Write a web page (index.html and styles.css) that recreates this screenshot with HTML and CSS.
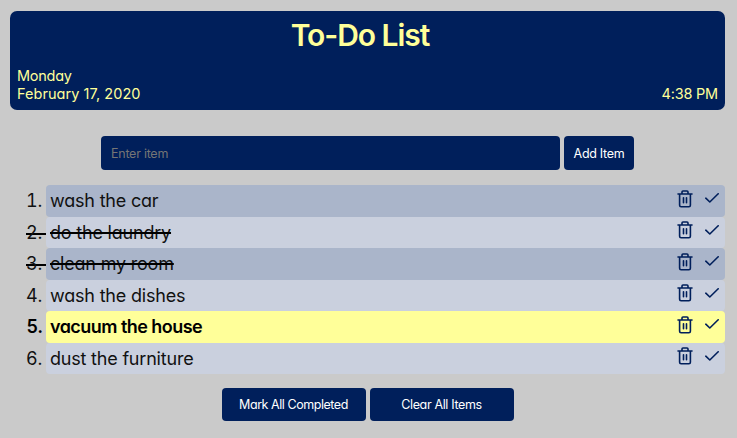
FILE: index.html
```html
<!DOCTYPE html>
<html lang="en">
<head>
<meta charset="utf-8">
<title>To-Do List</title>
<link rel="stylesheet" href="styles.css">
</head>
<body>
<svg class="defs" aria-hidden="true">
  <symbol id="trash" viewBox="0 0 16 18"><path d="M1 4H15M5 4V2Q5 1 6 1H10Q11 1 11 2V4M2.6 4V15.2Q2.6 16.7 4.1 16.7H11.9Q13.4 16.7 13.4 15.2V4M6.5 7.7V12.7M9.5 7.7V12.7"/></symbol>
  <symbol id="check" viewBox="0 0 14 10"><path d="M.8 5.2L4.8 9L13.2 .8"/></symbol>
</svg>
<header class="header">
  <h1>To-Do List</h1>
  <div class="info">
    <div><div class="day">Monday</div><div class="date">February 17, 2020</div></div>
    <div class="time">4:38 PM</div>
  </div>
</header>
<form class="entry">
  <input type="text" placeholder="Enter item">
  <button type="button" class="add">Add Item</button>
</form>
<ol class="list">
  <li><span class="num">1.</span><div class="row"><span class="text">wash the car</span><svg class="trash"><use href="#trash"/></svg><svg class="check"><use href="#check"/></svg></div></li>
  <li class="done"><span class="num">2.</span><div class="row"><span class="text">do the laundry</span><svg class="trash"><use href="#trash"/></svg><svg class="check"><use href="#check"/></svg></div></li>
  <li class="done"><span class="num">3.</span><div class="row"><span class="text">clean my room</span><svg class="trash"><use href="#trash"/></svg><svg class="check"><use href="#check"/></svg></div></li>
  <li><span class="num">4.</span><div class="row"><span class="text">wash the dishes</span><svg class="trash"><use href="#trash"/></svg><svg class="check"><use href="#check"/></svg></div></li>
  <li class="active"><span class="num">5.</span><div class="row"><span class="text">vacuum the house</span><svg class="trash"><use href="#trash"/></svg><svg class="check"><use href="#check"/></svg></div></li>
  <li><span class="num">6.</span><div class="row"><span class="text">dust the furniture</span><svg class="trash"><use href="#trash"/></svg><svg class="check"><use href="#check"/></svg></div></li>
</ol>
<footer class="actions">
  <button type="button" class="mark">Mark All Completed</button>
  <button type="button">Clear All Items</button>
</footer>
</body>
</html>
```
FILE: styles.css
```css
* { box-sizing: border-box; }
body, input, button {
  font-family: Inter, Lato, sans-serif;
  font-feature-settings: "cv11";
}
body {
  margin: 0;
  padding: 11px 12px 0 10px;
  height: 438px;
  overflow: hidden;
  background: #cacaca;
  color: #111;
}
.defs { display: none; }
.header {
  height: 99px;
  padding: 6px 7px 0;
  border-radius: 7px;
  background: #001f5b;
  color: #ffff99;
}
h1 {
  margin: 0;
  padding-right: 15px;
  height: 50px;
  line-height: 37px;
  font-size: 30px;
  font-weight: 600;
  letter-spacing: -1.05px;
  text-align: center;
}
.info {
  display: flex;
  justify-content: space-between;
  align-items: flex-end;
  font-size: 14.5px;
  font-weight: 400;
  line-height: 18px;
}
.day { letter-spacing: -.25px; }
.date { letter-spacing: .05px; }
.time { letter-spacing: -.2px; }
.entry {
  display: flex;
  gap: 4px;
  margin: 26px 0 0 91px;
}
input, button {
  height: 34px;
  border: 0;
  border-radius: 4px;
  background: #001f5b;
  color: #fff;
  font-size: 12.5px;
  letter-spacing: -.25px;
}
input { width: 459px; padding: 0 10px; }
input::placeholder { color: #757575; opacity: 1; }
button { padding: 0; text-align: center; }
.add { width: 70px; letter-spacing: -.3px; }
.list {
  margin: 15px 0 0;
  padding: 0;
  list-style: none;
  font-size: 18px;
  line-height: 32px;
  letter-spacing: -.2px;
}
.list li { display: flex; height: 31.5px; font-weight: 370; }
.num {
  flex: none;
  width: 20px;
  margin-left: 16px;
  padding-right: 4px;
  text-align: right;
  font-feature-settings: "tnum";
}
.row {
  flex: 1;
  display: flex;
  align-items: flex-start;
  height: 31.5px;
  padding: 0 6px 0 4px;
  border-radius: 4px;
  background: #cad0de;
}
.text { margin-right: auto; }
li:nth-child(odd) .row { background: #aab5ca; }
.done .text { text-decoration: line-through #000 2px; }
.done .num {
  background: linear-gradient(#000, #000) 0 16px / 100% 2px no-repeat;
}
.list .active { color: #000; font-weight: 600; letter-spacing: -.55px; }
.list .active .row { background: #ffff99; }
.row svg { fill: none; stroke: #001f5b; stroke-width: 1.6; stroke-linecap: round; stroke-linejoin: round; }
.trash { width: 16px; height: 18px; margin: 4.5px 12px 0 0; }
.check { width: 14px; height: 10px; margin-top: 8px; }
.actions { display: flex; justify-content: center; gap: 4px; margin-top: 14px; }
.actions button { width: 144px; height: 33px; letter-spacing: -.35px; }
.actions .mark { letter-spacing: -.45px; }
```
